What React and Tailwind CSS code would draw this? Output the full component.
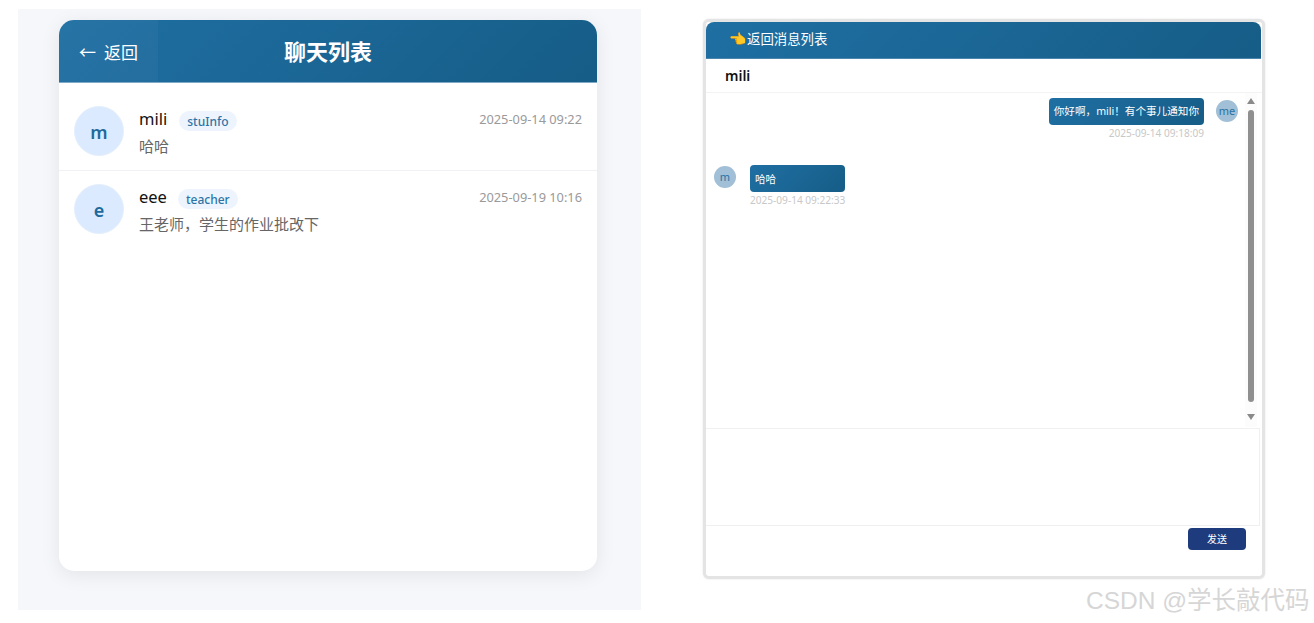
import React from "react";

const font = { fontFamily: '"Noto Sans", "Noto Sans CJK SC", sans-serif' };
const grad = "bg-[linear-gradient(135deg,#1f6fa3,#165d87)]";

function Row({ initial, name, tag, time, text, gap, border, pt }) {
  return (
    <div className={`flex h-[88px] pl-[15px] pr-[15px] ${pt} ${border ? "border-b border-[#eff1f4]" : ""}`}>
      <div className="w-[50px] h-[50px] rounded-full bg-[#dbeafe] border border-[#e4effc] flex items-center justify-center text-[18px] font-semibold text-[#1d6a9c] shrink-0 pt-[2px]">
        {initial}
      </div>
      <div className="ml-[15px] flex-1 min-w-0">
        <div className="flex items-center justify-between h-[26px]">
          <div className="flex items-center">
            <span className="text-[16.5px] leading-[24px] text-[#111]">{name}</span>
            <span className={`${gap} h-[20px] mt-[3px] px-[8px] rounded-full bg-[#eef4fd] text-[12px] leading-[21px] font-medium text-[#2c74a6]`}>{tag}</span>
          </div>
          <span className="text-[12.8px] leading-[20px] text-[#9a9a9a]">{time}</span>
        </div>
        <div className="text-[15px] leading-[20px] mt-[4px] text-[#666]">{text}</div>
      </div>
    </div>
  );
}

function Avatar({ children }) {
  return (
    <div className="w-[22px] h-[22px] rounded-full bg-[#a1bfd6] flex items-center justify-center text-[11px] text-[#2a72a3] shrink-0">
      {children}
    </div>
  );
}

export default function App() {
  return (
    <div className="relative w-[1314px] h-[623px] bg-white overflow-hidden flex items-start" style={font}>
      {/* left */}
      <div className="ml-[18px] mt-[9px] w-[623px] h-[601px] bg-[#f5f7fb] pl-[41px] pt-[11px] shrink-0">
        <div className="w-[538px] h-[551px] bg-white rounded-[15px] overflow-hidden shadow-[0_4px_20px_rgba(0,0,0,0.08)]">
          <div className={`relative h-[63px] ${grad} border-b border-[#7fa9c6] flex items-center justify-center`}>
            <div className="absolute left-0 top-0 bottom-0 w-[99px] bg-white/[0.03] flex items-center pl-[20px] pt-[4px] text-white text-[17px] gap-[8px]">
              <span>←</span>
              <span>返回</span>
            </div>
            <span className="text-white text-[22px] font-bold">聊天列表</span>
          </div>
          <Row initial="m" name="mili" tag="stuInfo" time="2025-09-14 09:22" text="哈哈" gap="ml-[12px]" border pt="pt-[23px]" />
          <Row initial="e" name="eee" tag="teacher" time="2025-09-19 10:16" text="王老师，学生的作业批改下" gap="ml-[11px]" pt="pt-[13px]" />
        </div>
      </div>

      {/* right */}
      <div className="ml-[62px] mt-[19px] w-[562px] h-[560px] border-[3px] border-[#e4e4e4] rounded-[6px] bg-white shadow-[0_0_2px_rgba(0,0,0,0.12)] flex flex-col shrink-0">
        <div className={`h-[37px] mr-[1px] rounded-t-[8px] ${grad} border-b border-[#4d86ad] flex items-center pl-[23px] pb-[2px] text-white text-[13.4px] shrink-0`}>
          <span className="text-[14px] leading-none">👈</span>
          <span className="ml-[1px]">返回消息列表</span>
        </div>
        <div className="h-[34px] border-b border-[#f3f3f3] flex items-center pl-[19px] text-[14px] font-semibold text-[#111] shrink-0">
          mili
        </div>
        <div className="flex h-[334px] shrink-0">
          <div className="flex-1 min-w-0 pl-[8px] pr-[7px] pt-[5px]">
            <div className="flex justify-end">
              <div className="flex flex-col items-end">
                <div className={`h-[27px] px-[5px] rounded-[4px] ${grad} text-white text-[10.6px] leading-[27px]`}>
                  你好啊，mili！有个事儿通知你
                </div>
                <div className="text-[10.1px] leading-[14px] mt-[1px] text-[#c8c8c8]">2025-09-14 09:18:09</div>
              </div>
              <div className="ml-[12px] mt-[2px]"><Avatar>me</Avatar></div>
            </div>
            <div className="flex mt-[25px]">
              <div className="mt-[1px]"><Avatar>m</Avatar></div>
              <div className="ml-[14px] flex flex-col items-start">
                <div className={`h-[27px] w-[95px] px-[5px] pt-[1px] rounded-[4px] ${grad} text-white text-[10.6px] leading-[27px]`}>
                  哈哈
                </div>
                <div className="text-[10.1px] leading-[14px] mt-[1px] text-[#c8c8c8]">2025-09-14 09:22:33</div>
              </div>
            </div>
          </div>
          <div className="w-[12px] mr-[5px] bg-[#fcfcfc] flex flex-col items-center shrink-0">
            <svg width="8" height="6" viewBox="0 0 8 6" className="mt-[5px]"><path d="M4 0 L8 6 L0 6 Z" fill="#8a8a8a" /></svg>
            <div className="w-[6px] h-[292px] rounded-[3px] bg-[#8f8f8f] mt-[6px]" />
            <svg width="8" height="6" viewBox="0 0 8 6" className="mt-[12px]"><path d="M0 0 L8 0 L4 6 Z" fill="#8a8a8a" /></svg>
          </div>
        </div>
        <div className="h-[98px] mr-[2px] mt-[1px] border border-l-0 border-[#f0f0f0] shrink-0" />
        <div className="flex justify-end pr-[16px] pt-[2px]">
          <div className="w-[58px] h-[22px] rounded-[4px] bg-[#1e3c7d] text-white text-[10px] flex items-center justify-center">发送</div>
        </div>
      </div>

      {/* watermark */}
      <div className="absolute left-[1086px] top-[584px] text-[24.5px] leading-[34px] text-[#d6d6d6] whitespace-nowrap" style={{ fontFamily: '"Liberation Sans", "Noto Sans CJK SC", sans-serif' }}>
        CSDN @学长敲代码
      </div>
    </div>
  );
}
